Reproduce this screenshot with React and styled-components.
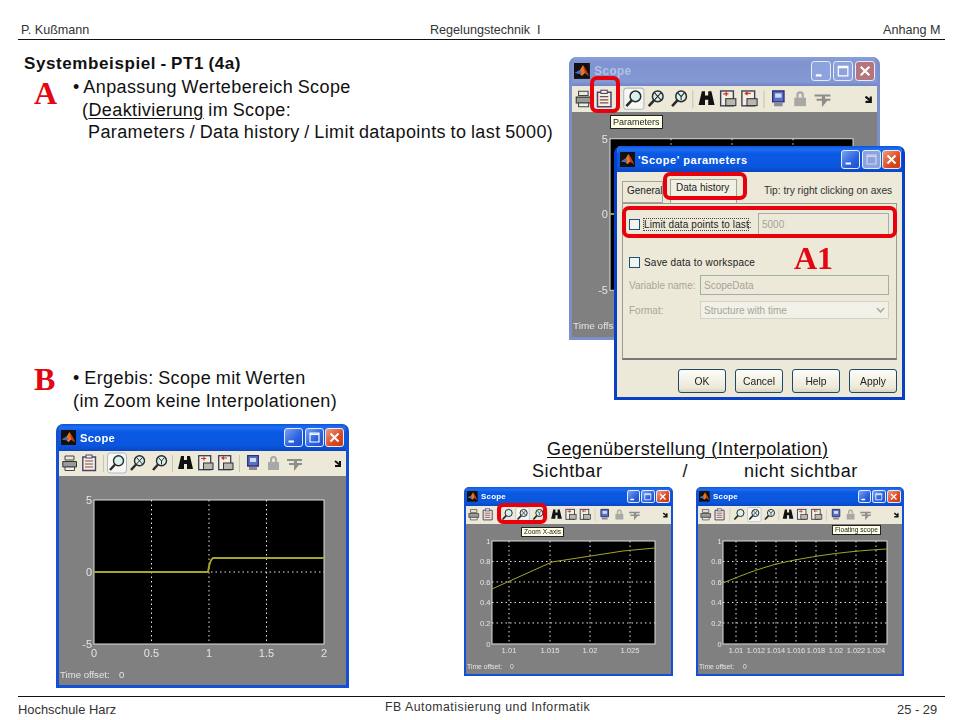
import React from "react";
import styled, { createGlobalStyle } from "styled-components";

const Global = createGlobalStyle`
  html, body { margin: 0; padding: 0; background: #fff; }
  body { font-family: "Liberation Sans", Arial, sans-serif; color: #111; }
`;

const Slide = styled.div`
  width: 960px; height: 720px; display: flex; flex-direction: column;
  background: #fff; overflow: hidden;
`;
const Header = styled.header`
  margin: 0 15px 0 18px; height: 40px; box-sizing: border-box;
  display: grid; grid-template-columns: 409px 453px auto; align-items: end;
  border-bottom: 1px solid #111; padding: 0 0 2px 3px;
  font-size: 12.6px; line-height: 14px; color: #333;
`;
const Main = styled.main`
  flex: 1; display: flex; min-height: 0;
`;
const LeftColumn = styled.section`
  width: 464px; flex: none; display: flex; flex-direction: column;
`;
const RightColumn = styled.section`
  width: 496px; flex: none; display: flex; flex-direction: column; position: relative;
`;
const Title = styled.h1`
  margin: 14px 0 0 24px; font-size: 17px; line-height: 20px; font-weight: 700;
  letter-spacing: .6px; word-spacing: -1px; color: #111;
`;
const Section = styled.div`
  display: flex; margin-top: ${p => p.$top}px; height: ${p => p.$height}px;
`;
const Marker = styled.div`
  font-family: "Liberation Serif", "Times New Roman", serif; font-weight: 700;
  color: #e30613; font-size: 32px; line-height: 32px;
  width: ${p => p.$width}px; padding-left: 34px; box-sizing: border-box; flex: none;
  margin-top: ${p => p.$top}px;
`;
const Lines = styled.div`
  font-size: 18px; line-height: 22.6px; letter-spacing: .4px; word-spacing: -.8px; white-space: nowrap;
`;
const Line = styled.div`
  padding-left: ${p => p.$indent || 0}px;
`;
const Underlined = styled.span`
  text-decoration: underline; text-underline-offset: 2px; text-decoration-thickness: 1px;
`;
const BigScopeSlot = styled.div`
  margin: 11px 0 0 56px;
`;
const OverlapStack = styled.div`
  height: 398px; flex: none;
`;
const Floating = styled.div`
  position: absolute; left: ${p => p.$x - 464}px; top: ${p => p.$y - 40}px;
  width: ${p => p.$w ? p.$w + "px" : "auto"}; height: ${p => p.$h ? p.$h + "px" : "auto"};
`;
const RedFrame = styled(Floating)`
  box-sizing: border-box; border: 4px solid #e8000d; border-radius: ${p => p.$r || 7}px;
`;
const CalloutLabel = styled.div`
  font-family: "Liberation Serif", "Times New Roman", serif; font-weight: 700;
  color: #e30613; font-size: 32px; line-height: 32px; white-space: nowrap;
`;
const Caption = styled.div`
  font-size: 18px; line-height: 22px; color: #111; height: 49px; flex: none;
`;
const CaptionTitle = styled.div`
  padding-left: 83px; letter-spacing: .4px; text-decoration: underline; text-underline-offset: 2px; text-decoration-thickness: 1px;
`;
const CaptionRow = styled.div`
  display: flex; padding-left: 68px; letter-spacing: .55px;
`;
const CaptionPart = styled.span`
  margin-left: ${p => p.$left || 0}px;
`;
const CompareRow = styled.div`
  display: flex; gap: 23px;
`;
const Footer = styled.footer`
  margin: 0 15px 0 18px; height: 24px; flex: none; box-sizing: border-box;
  border-top: 1px solid #111;
  display: grid; grid-template-columns: 367px 512px auto;
  color: #333; line-height: 14px;
`;
const FooterCell = styled.div`
  padding-top: ${p => p.$top}px; letter-spacing: ${p => p.$ls || 0}px; font-size: ${p => p.$fs}px;
`;

/* ---------- XP style window ---------- */
const Win = styled.div`
  width: ${p => p.$w}px; height: ${p => p.$h}px; box-sizing: border-box; display: flex; flex-direction: column;
  border: ${p => p.$s * 3}px solid ${p => p.$inactive ? "#7b8fcb" : "#1450d6"}; border-top: 0;
  border-radius: ${p => p.$s * 7}px ${p => p.$s * 7}px 0 0;
  overflow: hidden; background: #808080; filter: blur(.35px);
`;
const TitleBar = styled.div`
  height: ${p => p.$s * 27}px; flex: none; display: flex; align-items: center;
  margin: 0 ${p => -p.$s * 3}px; padding: 0 ${p => p.$s * 5}px 0 ${p => p.$s * 5}px;
  background: ${p => p.$inactive
    ? "linear-gradient(180deg,#8a9fdb,#7f93cf 20%,#8498d4 85%,#7286c4)"
    : "linear-gradient(180deg,#0a55dd,#1f6df0 12%,#0b59e3 30%,#0a56de 80%,#0a46c0)"};
`;
const TitleText = styled.span`
  flex: 1; font-weight: 700; white-space: nowrap; margin-left: ${p => p.$s * 4}px;
  font-size: ${p => p.$s * 11.2}px; letter-spacing: ${p => p.$s * .3}px;
  color: ${p => p.$inactive ? "#b3c0e6" : "#fff"};
`;
const CapButton = styled.span`
  width: ${p => p.$s * 19}px; height: ${p => p.$s * 19}px; box-sizing: border-box; flex: none;
  border: 1px solid #e6ecfa; border-radius: ${p => p.$s * 3}px; position: relative;
  margin-left: ${p => p.$s * 1.5}px;
  background: ${p => p.$close
    ? (p.$inactive ? "#b5757f" : "linear-gradient(135deg,#ee9a7b,#dc4b22 60%,#c63a12)")
    : (p.$inactive ? "#8ea3de" : "linear-gradient(135deg,#7aa2f2,#2a62e0 60%,#1c4fcb)")};
`;
const CapGlyph = styled.svg`
  position: absolute; inset: 0; width: 100%; height: 100%; display: block;
`;
const ToolbarStrip = styled.svg`
  display: block; flex: none; background: #ece9d8; width: calc(100% + ${p => p.$s * 6}px);
  margin: 0 ${p => -p.$s * 3}px; height: ${p => p.$s * 25}px;
`;
const ChartArea = styled.svg`
  display: block; flex: 1; width: 100%; min-height: 0;
`;
const Tooltip = styled.div`
  box-sizing: border-box; background: #ffffe8; border: 1px solid #222; color: #222;
  font-size: ${p => p.$size}px; padding: 0 2px; white-space: nowrap; filter: blur(.3px);
  line-height: ${p => p.$lh}px;
`;

function MatlabLogo({ size }) {
  return (
    <svg width={size} height={size} viewBox="0 0 16 16" style={{ flex: "none" }}>
      <rect width="16" height="16" fill="#111" />
      <path d="M1 10 L6 7 L9 2 L12 7 L15 13 L11 10 L8 13 L5 10Z" fill="#e8761a" />
      <path d="M1 10 L6 7 L8 10 L5 11Z" fill="#3c70c8" />
      <path d="M9 2 L12 7 L15 13 L11 10Z" fill="#c8361a" />
    </svg>
  );
}

function Magnifier({ x, mark, y = 4 }) {
  return (
    <g transform={`translate(${x} ${y})`} stroke="#2a2a2a" fill="none">
      <circle cx="9.5" cy="5.8" r="5" fill="#d8f0ee" strokeWidth="1.4" />
      <path d="M6 9.5 L1 15" strokeWidth="2.4" />
      {mark === "x" && <path d="M6.5 9 L12.5 2.5 M6.5 2.5 L12.5 9" strokeWidth="1" />}
      {mark === "y" && <path d="M6.5 2.5 L9.5 6 L12.5 2.5 M9.5 6 V9.5" strokeWidth="1" />}
    </g>
  );
}
function DocIcon({ x, flip }) {
  return (
    <g transform={`translate(${x} 4)`}>
      <rect x=".7" y=".7" width="12" height="14" fill="#f4eee0" stroke="#3c3c5c" strokeWidth="1.3" />
      <path d={flip ? "M9 3 L4 3 M6 1.5 L4 3 L6 4.5" : "M3 3.5 H8 M6 1.5 V5.5"} stroke="#c23a2a" strokeWidth="1.2" fill="none" />
      <rect x="5.5" y="8" width="9.5" height="6.5" fill="#b8b8b0" stroke="#333" />
    </g>
  );
}
function Toolbar({ s, hot }) {
  const hotX = hot === "x" ? 72 : 51;
  return (
    <ToolbarStrip $s={s} viewBox="0 0 293 25" preserveAspectRatio="none">
      <g transform="translate(6 5)">
        <path d="M3 0 H12 V4 H3Z" fill="#e8e8e0" stroke="#444" />
        <path d="M.8 5.5 H14.5 V11 H.8Z" fill="#9a9a98" stroke="#333" />
        <path d="M3 11 H12.5 V14.5 H3Z" fill="#eee" stroke="#444" />
      </g>
      <g transform="translate(26 4)">
        <path d="M.8 2 H13.5 V15.5 H.8Z" fill="#f6f0d8" stroke="#4a4272" strokeWidth="1.4" />
        <rect x="4" y="0" width="6" height="3" fill="#f6f0d8" stroke="#4a4272" />
        <path d="M3 6 H11 M3 9 H11 M3 12 H11" stroke="#7a4a60" strokeWidth="1.2" />
      </g>
      <path d="M47.5 4 V21" stroke="#c8c4b0" />
      <rect x={hotX + .5} y="2" width="19" height="20" rx="3" fill="#f8f8f2" stroke="#aab8cc" />
      <Magnifier x={53} />
      <Magnifier x={74} mark="x" />
      <Magnifier x={96} mark="y" />
      <path d="M116.5 4 V21" stroke="#c8c4b0" />
      <g transform="translate(122 4)" fill="#111">
        <path d="M3 1 H6 V5 H9 V1 H12 L15 14 H9 V9 H6 V14 H0Z" />
      </g>
      <DocIcon x={142} />
      <DocIcon x={162} flip />
      <path d="M183.5 4 V21" stroke="#c8c4b0" />
      <g transform="translate(191 4)">
        <path d="M.7.7 H11.3 V11 H.7Z" fill="#5870c8" stroke="#302c78" strokeWidth="1.3" />
        <rect x="3" y="3" width="6" height="4" fill="#c8e0f0" />
        <path d="M2 12 H10 V15 H2Z" fill="#8a8a90" />
      </g>
      <g transform="translate(211 4)" fill="#a8a8a4">
        <path d="M3 7 V4.5 a3.5 3.5 0 0 1 7 0 V7 H8 V4.5 a1.5 1.5 0 0 0 -3 0 V7Z" />
        <rect x="1" y="7" width="11" height="8" />
      </g>
      <g transform="translate(231 5)" fill="#8e8e8a">
        <path d="M0 3 H15 V5 H10 V7 H15 V9 H12 L7 15 V9 H2 V7 H7 V5 H0Z" />
      </g>
      <path d="M279 10 L284 14 M284 10 V15 H279" stroke="#111" strokeWidth="2" fill="none" />
    </ToolbarStrip>
  );
}

function Chart({ view, plot, xt, yt, gridX, gridY, line, fs, xLabelDy, yLabelDx, off, lw = 2, tx, offFs, zero }) {
  const [x0, y0, x1, y1] = plot;
  return (
    <ChartArea viewBox={view.join(" ")} preserveAspectRatio="none">
      <rect x={view[0]} y={view[1]} width={view[2]} height={view[3]} fill="#808080" />
      <rect x={x0} y={y0} width={x1 - x0} height={y1 - y0} fill="#000" stroke="#ddd" strokeWidth="1" />
      {gridX.map(x => <path key={x} d={`M${x} ${y0} V${y1}`} stroke="#e8e8e8" strokeWidth="1" strokeDasharray="1.5 3" />)}
      {gridY.map(y => <path key={y} d={`M${x0} ${y} H${x1}`} stroke="#e8e8e8" strokeWidth="1" strokeDasharray="1.5 3" />)}
      <path d={line} stroke="#a5a52a" strokeWidth={lw} fill="none" />
      <g fill="#e4e4e4" fontSize={fs} fontFamily="Liberation Sans, Arial, sans-serif">
        {xt.map(([x, l]) => <text key={l} x={x} y={y1 + xLabelDy} textAnchor="middle">{l}</text>)}
        {yt.map(([y, l]) => <text key={l} x={x0 - yLabelDx} y={y + fs * .36} textAnchor="end">{l}</text>)}
        <text x={tx} y={off} fontSize={offFs}>Time offset:</text>
        <text x={zero} y={off} fontSize={offFs}>0</text>
      </g>
    </ChartArea>
  );
}

function ScopeWindow({ w, h, s, inactive, hot, children }) {
  return (
    <Win $w={w} $h={h} $s={s} $inactive={inactive}>
      <TitleBar $s={s} $inactive={inactive}>
        <MatlabLogo size={s * 15} />
        <TitleText $s={s} $inactive={inactive}>Scope</TitleText>
        <CapButton $s={s} $inactive={inactive}>
          <CapGlyph viewBox="0 0 19 19"><path d="M4 14 H10" stroke="#fff" strokeWidth="2.4" /></CapGlyph>
        </CapButton>
        <CapButton $s={s} $inactive={inactive}>
          <CapGlyph viewBox="0 0 19 19"><path d="M4.5 4.5 H14.5 V14.5 H4.5Z M4.5 6 H14.5" stroke="#fff" strokeWidth="1.3" fill="none" /></CapGlyph>
        </CapButton>
        <CapButton $s={s} $inactive={inactive} $close>
          <CapGlyph viewBox="0 0 19 19"><path d="M5 5 L14 14 M14 5 L5 14" stroke="#fff" strokeWidth="2.2" /></CapGlyph>
        </CapButton>
      </TitleBar>
      <Toolbar s={s} hot={hot} />
      {children}
    </Win>
  );
}

/* ---------- parameter dialog ---------- */
const Dialog = styled.div`
  width: 291px; height: 254px; box-sizing: border-box; display: flex; flex-direction: column;
  border: 3px solid #0a3fc8; border-top: 0; border-radius: 7px 7px 0 0; overflow: hidden;
  background: #ece9d8; filter: blur(.35px); color: #222;
  font-size: 10px;
`;
const DialogBar = styled.div`
  height: 26px; flex: none; margin: 0 -3px; padding: 0 4px 0 6px; display: flex; align-items: center;
  background: linear-gradient(180deg,#0a55dd,#1f6df0 12%,#0b59e3 30%,#0a56de 80%,#0a46c0);
`;
const DialogTitle = styled.span`
  flex: 1; margin-left: 3px; padding-top: 2px; font-size: 11px; font-weight: 700; color: #fff; letter-spacing: .5px; white-space: nowrap;
`;
const TabRow = styled.div`
  display: flex; align-items: flex-end; height: 31px; padding-left: 5px; flex: none; position: relative;
`;
const Tab = styled.div`
  box-sizing: border-box; border: 1px solid #a5a294; border-bottom: ${p => p.$on ? "0" : "1px solid #a5a294"};
  background: ${p => p.$on ? "#f2f0e4" : "#ece9d8"}; height: ${p => p.$on ? 24 : 22}px;
  width: ${p => p.$w}px; margin-left: ${p => p.$left || 0}px; padding: ${p => p.$on ? "2px 0 0 5px" : "3px 0 0 4px"};
  white-space: nowrap; font-size: 10px; overflow: hidden;
`;
const Tip = styled.span`
  margin-left: 27px; padding-bottom: 7px; font-size: 10.2px; color: #333; white-space: nowrap;
`;
const Panel = styled.div`
  margin: 0 5px; height: 157px; box-sizing: border-box; flex: none; border: 1px solid #9c9a8c; border-bottom: 2px solid #777;
  padding: 9px 7px 0 6px; display: flex; flex-direction: column;
`;
const OptionRow = styled.div`
  display: flex; align-items: center; height: ${p => p.$h}px; margin-top: ${p => p.$top || 0}px; flex: none;
`;
const Check = styled.span`
  width: 11px; height: 11px; box-sizing: border-box; border: 1px solid #1c5180; background: #f4f4ee; flex: none; margin-right: 4px;
`;
const OptionLabel = styled.span`
  white-space: nowrap; width: ${p => p.$w ? p.$w + "px" : "auto"}; color: ${p => p.$dim ? "#a8a79a" : "#222"}; flex: none;
  outline: ${p => p.$focus ? "1px dotted #444" : "none"};
  margin-right: ${p => p.$right || 0}px; letter-spacing: ${p => p.$ls || 0}px;
`;
const Field = styled.span`
  flex: 1; height: ${p => p.$h}px; box-sizing: border-box; border: 1px solid #9fb0a8;
  color: #a5a498; padding: 0 3px; display: flex; align-items: center; justify-content: space-between;
  background: ${p => p.$light ? "#f2f1e8" : "#ece9d8"}; border-color: ${p => p.$light ? "#d4d2c2" : "#9fb0a8"};
`;
const ButtonRow = styled.div`
  display: flex; justify-content: flex-end; gap: 9px; padding: 9px 5px 0 0; flex: none;
`;
const DialogButton = styled.span`
  width: 48px; height: 24px; box-sizing: border-box; border: 1px solid #1c4a68; border-radius: 3px;
  background: linear-gradient(180deg,#fdfdf8,#ece9d8 80%,#d8d4c0);
  display: flex; align-items: center; justify-content: center; font-size: 10.3px; color: #222;
`;

export default function App() {
  return (
    <Slide>
      <Global />
      <Header>
        <span>P. Kußmann</span>
        <span>Regelungstechnik&nbsp; I</span>
        <span>Anhang M</span>
      </Header>
      <Main>
        <LeftColumn>
          <Title>Systembeispiel - PT1 (4a)</Title>
          <Section $top={2} $height={68}>
            <Marker $width={73} $top={1}>A</Marker>
            <Lines>
              <Line>• Anpassung Wertebereich Scope</Line>
              <Line $indent={9}>(<Underlined>Deaktivierung</Underlined> im Scope:</Line>
              <Line $indent={15}>Parameters / Data history / Limit datapoints to last 5000)</Line>
            </Lines>
          </Section>
          <Section $top={223} $height={46}>
            <Marker $width={73} $top={-4}>B</Marker>
            <Lines>
              <Line>• Ergebis: Scope mit Werten</Line>
              <Line>(im Zoom keine Interpolationen)</Line>
            </Lines>
          </Section>
          <BigScopeSlot>
            <ScopeWindow w={293} h={264} s={1}>
              <Chart
                view={[59, 476, 287, 209]}
                plot={[94, 500, 324, 644]}
                xt={[[94, "0"], [151.5, "0.5"], [209, "1"], [266.5, "1.5"], [324, "2"]]}
                yt={[[500, "5"], [572, "0"], [644, "-5"]]}
                gridX={[151.5, 209, 266.5]}
                gridY={[572]}
                line="M94 572 H208 C209 565 210 560 213 558 H324"
                fs={11}
                xLabelDy={12.5}
                yLabelDx={2}
                off={678}
                tx={60}
                offFs={9.6}
                zero={119}
              />
            </ScopeWindow>
          </BigScopeSlot>
        </LeftColumn>
        <RightColumn>
          <OverlapStack>
            <Floating $x={569} $y={57}>
              <ScopeWindow w={311} h={283} s={1.06} inactive>
                <Chart
                  view={[572, 110, 305, 227]}
                  plot={[610, 137, 853, 290]}
                  xt={[]}
                  yt={[[137, "5"], [213, "0"], [290, "-5"]]}
                  gridX={[671, 732, 793]}
                  gridY={[213]}
                  line="M610 213 H700"
                  fs={11}
                  xLabelDy={14}
                  yLabelDx={2}
                  off={329}
                  tx={573}
                  offFs={10}
                  zero={640}
                />
              </ScopeWindow>
            </Floating>
            <Floating $x={610} $y={115}>
              <Tooltip $size={9} $lh={12}>Parameters</Tooltip>
            </Floating>
            <Floating $x={614} $y={146}>
              <Dialog>
                <DialogBar>
                  <MatlabLogo size={15} />
                  <DialogTitle>'Scope' parameters</DialogTitle>
                  <CapButton $s={1}>
                    <CapGlyph viewBox="0 0 19 19"><path d="M4 14 H10" stroke="#fff" strokeWidth="2.4" /></CapGlyph>
                  </CapButton>
                  <CapButton $s={1} $inactive>
                    <CapGlyph viewBox="0 0 19 19"><path d="M4.5 4.5 H14.5 V14.5 H4.5Z M4.5 6 H14.5" stroke="#cdd8f4" strokeWidth="1.3" fill="none" /></CapGlyph>
                  </CapButton>
                  <CapButton $s={1} $close>
                    <CapGlyph viewBox="0 0 19 19"><path d="M5 5 L14 14 M14 5 L5 14" stroke="#fff" strokeWidth="2.2" /></CapGlyph>
                  </CapButton>
                </DialogBar>
                <TabRow>
                  <Tab $w={41}>General</Tab>
                  <Tab $w={67} $on $left={7}>Data history</Tab>
                  <Tip>Tip: try right clicking on axes</Tip>
                </TabRow>
                <Panel>
                  <OptionRow $h={22}>
                    <Check />
                    <OptionLabel $w={104} $focus $right={10} $ls={.1}>Limit data points to last:</OptionLabel>
                    <Field $h={23}>5000</Field>
                  </OptionRow>
                  <OptionRow $h={14} $top={20}>
                    <Check />
                    <OptionLabel $ls={.2}>Save data to workspace</OptionLabel>
                  </OptionRow>
                  <OptionRow $h={20} $top={6}>
                    <OptionLabel $w={71} $dim>Variable name:</OptionLabel>
                    <Field $h={20}>ScopeData</Field>
                  </OptionRow>
                  <OptionRow $h={18} $top={6}>
                    <OptionLabel $w={71} $dim>Format:</OptionLabel>
                    <Field $h={18} $light>Structure with time
                      <svg width="9" height="6" viewBox="0 0 9 6"><path d="M1 1 L4.5 5 L8 1" stroke="#aaa" strokeWidth="1.6" fill="none" /></svg>
                    </Field>
                  </OptionRow>
                </Panel>
                <ButtonRow>
                  <DialogButton>OK</DialogButton>
                  <DialogButton>Cancel</DialogButton>
                  <DialogButton>Help</DialogButton>
                  <DialogButton>Apply</DialogButton>
                </ButtonRow>
              </Dialog>
            </Floating>
            <RedFrame $x={590} $y={76} $w={30} $h={37} />
            <RedFrame $x={663} $y={172} $w={84} $h={28} />
            <RedFrame $x={622} $y={206} $w={275} $h={32} />
            <Floating $x={794} $y={242}>
              <CalloutLabel>A1</CalloutLabel>
            </Floating>
          </OverlapStack>
          <Caption>
            <CaptionTitle>Gegenüberstellung (Interpolation)</CaptionTitle>
            <CaptionRow>
              <CaptionPart>Sichtbar</CaptionPart>
              <CaptionPart $left={80}>/</CaptionPart>
              <CaptionPart $left={56}>nicht sichtbar</CaptionPart>
            </CaptionRow>
          </Caption>
          <CompareRow>
            <ScopeWindow w={209} h={189} s={.713} hot="x">
              <Chart
                view={[466, 525, 205, 150]}
                plot={[492, 542, 655, 645]}
                xt={[[509, "1.01"], [550, "1.015"], [590, "1.02"], [630, "1.025"]]}
                yt={[[542, "1"], [562.5, "0.8"], [583, "0.6"], [603.5, "0.4"], [624, "0.2"], [645, "0"]]}
                gridX={[509, 550, 590, 630]}
                gridY={[562.5, 583, 603.5, 624]}
                line="M492 590 L552 563 L623 552 L655 549"
                fs={7.6}
                xLabelDy={9}
                yLabelDx={1.5}
                off={670}
                tx={467}
                lw={1}
                offFs={6.8}
                zero={510}
              />
            </ScopeWindow>
            <ScopeWindow w={208} h={189} s={.713} hot="x">
              <Chart
                view={[698, 525, 204, 150]}
                plot={[723, 542, 887, 645]}
                xt={[[736, "1.01"], [756, "1.012"], [776, "1.014"], [796, "1.016"], [816, "1.018"], [836, "1.02"], [856, "1.022"], [876, "1.024"]]}
                yt={[[542, "1"], [562.5, "0.8"], [583, "0.6"], [603.5, "0.4"], [624, "0.2"], [645, "0"]]}
                gridX={[736, 756, 776, 796, 816, 836, 856, 876]}
                gridY={[562.5, 583, 603.5, 624]}
                line="M723 584 C745 575 765 567 790 562 C820 556 850 552 887 550"
                fs={7.4}
                xLabelDy={9}
                yLabelDx={1.5}
                off={670}
                tx={699}
                lw={1}
                offFs={6.8}
                zero={743}
              />
            </ScopeWindow>
            <Floating $x={521} $y={527}>
              <Tooltip $size={6.6} $lh={8}>Zoom X-axis</Tooltip>
            </Floating>
            <Floating $x={832} $y={525}>
              <Tooltip $size={6.6} $lh={8}>Floating scope</Tooltip>
            </Floating>
            <RedFrame $x={497} $y={503} $w={50} $h={21} $r={6} />
          </CompareRow>
        </RightColumn>
      </Main>
      <Footer>
        <FooterCell $top={6} $fs={12.9}>Hochschule Harz</FooterCell>
        <FooterCell $top={3} $ls={.5} $fs={12.3}>FB Automatisierung und Informatik</FooterCell>
        <FooterCell $top={6} $fs={12.9}>25 - 29</FooterCell>
      </Footer>
    </Slide>
  );
}
